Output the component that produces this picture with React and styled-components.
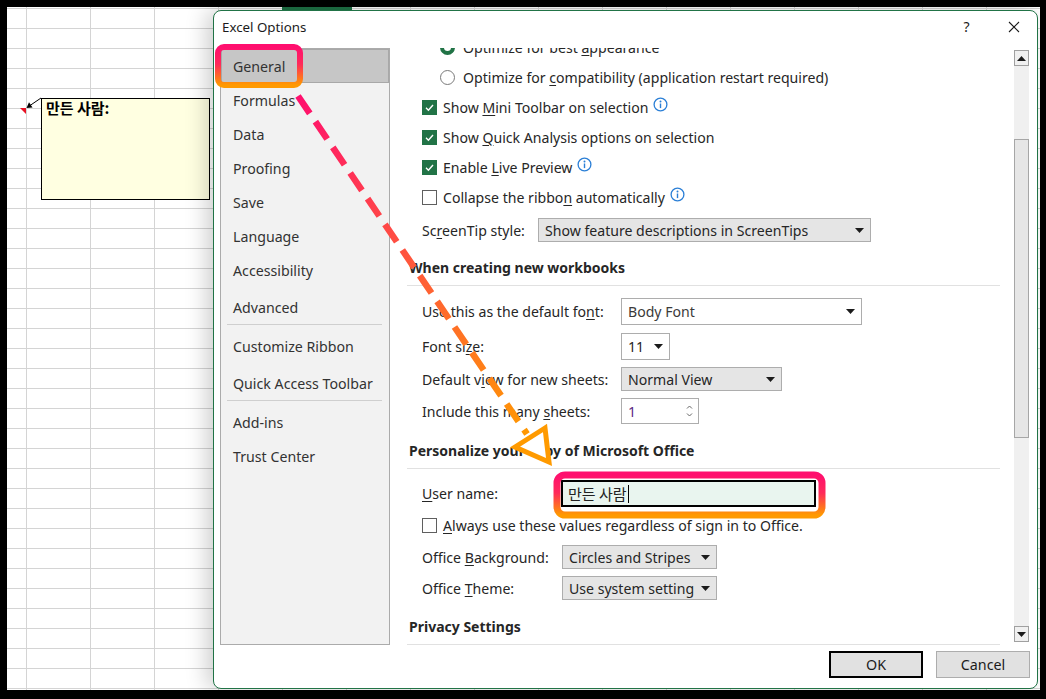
import React from 'react';
import styled, { createGlobalStyle } from 'styled-components';

const GlobalStyle = createGlobalStyle`
  html, body {
    margin: 0;
    padding: 0;
    background: #000;
  }
  body {
    font-family: "Noto Sans", "Open Sans", sans-serif;
    -webkit-font-smoothing: antialiased;
  }
`;

const Frame = styled.div`
  position: relative;
  width: 1046px;
  height: 699px;
  box-sizing: border-box;
  background: #000;
  padding: 7px 6px 9px 7px;
  overflow: hidden;
`;

const Sheet = styled.div`
  position: relative;
  height: 100%;
  background-color: #fff;
  background-image: linear-gradient(to right, #d4d4d4 1px, transparent 1px),
    linear-gradient(to bottom, #d4d4d4 1px, transparent 1px);
  background-size: 64px 20px;
  background-position: 19px 1px;
`;

const ColumnMark = styled.div`
  margin-left: 275px;
  width: 70px;
  height: 3px;
  background: #1e7145;
`;

const Comment = styled.div`
  position: absolute;
  left: 34px;
  top: 91px;
  width: 169px;
  height: 102px;
  box-sizing: border-box;
  border: 1px solid #000;
  background: #ffffe1;
  padding: 0 4px;
  font-family: "Noto Sans CJK KR", sans-serif;
  font-weight: 700;
  font-size: 15px;
  line-height: 18px;
  color: #000;
`;

const Connector = styled.svg`
  position: absolute;
  left: 0;
  top: 0;
  width: 60px;
  height: 130px;
`;

const Dialog = styled.div`
  position: absolute;
  left: 206px;
  top: 3px;
  width: 825px;
  height: 679px;
  box-sizing: border-box;
  border: 1px solid #217346;
  border-radius: 8px;
  background: #fff;
  box-shadow: -6px 0 22px rgba(0, 0, 0, 0.2);
  display: flex;
  flex-direction: column;
  overflow: hidden;
  color: #262626;
`;

const TitleBar = styled.div`
  height: 29px;
  display: flex;
  align-items: center;
  padding-left: 8px;
  flex: none;
`;

const Title = styled.div`
  flex: 1;
  font-size: 13.3px;
  color: #1b1b1b;
  padding-top: 2px;
`;

const TitleButton = styled.div`
  width: 47px;
  height: 29px;
  display: flex;
  align-items: center;
  justify-content: center;
  font-size: 14px;
  color: #1b1b1b;
  padding-top: 2px;
`;

const Body = styled.div`
  height: 605px;
  display: flex;
  flex: none;
`;

const Nav = styled.div`
  margin: 8px 0 0 6px;
  width: 170px;
  height: 597px;
  box-sizing: border-box;
  border: 1px solid #ababab;
  background: #f2f2f2;
  flex: none;
`;

const NavItem = styled.div`
  height: 34px;
  margin-top: ${(p) => p.$mt || 0}px;
  box-sizing: border-box;
  display: flex;
  align-items: center;
  padding: 1px 0 0 11px;
  font-size: 14.2px;
  color: #333;
  background: ${(p) => (p.$active ? '#c6c6c6' : 'transparent')};
  border: 1px solid ${(p) => (p.$active ? '#a8a8a8' : 'transparent')};
`;

const NavRule = styled.div`
  height: 1px;
  margin: 0 7px 0 6px;
  background: #cfcfcf;
`;

const Content = styled.div`
  flex: 1;
  display: flex;
  min-width: 0;
`;

const Main = styled.div`
  flex: 1;
  margin-top: 8px;
  overflow: hidden;
  font-size: 14.1px;
`;

const Scroll = styled.div`
  margin-top: -16px;
`;

const Row = styled.div`
  display: flex;
  align-items: center;
  height: ${(p) => p.$h}px;
  margin-top: ${(p) => p.$mt || 0}px;
  padding-left: ${(p) => (p.$indent == null ? 32 : p.$indent)}px;
  white-space: nowrap;
`;

const Text = styled.span`
  white-space: pre;
`;

const Label = styled.div`
  width: ${(p) => p.$w}px;
  flex: none;
  white-space: pre;
`;

const Key = styled.span`
  text-decoration: underline;
  text-underline-offset: 2px;
  text-decoration-thickness: 1px;
`;

const Box = styled.span`
  width: 15px;
  height: 15px;
  box-sizing: border-box;
  flex: none;
  margin-right: 6px;
  border: 1px solid ${(p) => (p.$on ? '#217346' : '#5f5f5f')};
  background: ${(p) => (p.$on ? '#217346' : '#fff')};
  display: flex;
  align-items: center;
  justify-content: center;
`;

const Radio = styled.span`
  width: 15px;
  height: 15px;
  box-sizing: border-box;
  flex: none;
  margin-right: 8px;
  border-radius: 50%;
  border: ${(p) => (p.$on ? '4px solid #217346' : '1px solid #7a7a7a')};
  background: #fff;
`;

const InfoSvg = styled.svg`
  width: 15px;
  height: 15px;
  margin-left: 5px;
  margin-top: -6px;
  flex: none;
`;

const Section = styled.div`
  margin: 0 14px 0 17px;
  padding: ${(p) => p.$pt}px 0 7px 2px;
  border-bottom: 1px solid #e1e1e1;
  font-weight: 700;
  font-size: 14px;
  line-height: 20px;
  color: #262626;
`;

const Select = styled.div`
  width: ${(p) => p.$w}px;
  height: ${(p) => p.$h || 24}px;
  box-sizing: border-box;
  flex: none;
  border: 1px solid #adadad;
  background: ${(p) => (p.$white ? '#fff' : '#e5e5e5')};
  display: flex;
  align-items: center;
  justify-content: space-between;
  padding: 0 6px 0 6px;
`;

const SelectText = styled.span`
  color: ${(p) => p.$c || '#262626'};
`;

const Spin = styled.div`
  display: flex;
  flex-direction: column;
  gap: 4px;
  margin-right: -1px;
`;

const NameInput = styled.div`
  width: 255px;
  height: 27px;
  box-sizing: border-box;
  border: 2px solid #000;
  background: #e9f5ef;
  display: flex;
  align-items: center;
  padding-left: 5px;
  font-family: "Noto Sans CJK KR", sans-serif;
  font-size: 15px;
  color: #222;
`;

const Caret = styled.span`
  width: 1px;
  height: 18px;
  background: #000;
  margin-left: 1px;
`;

const ScrollBar = styled.div`
  width: 15px;
  margin: 10px 8px 3px 0;
  display: flex;
  flex-direction: column;
  background: #f0f0f0;
  flex: none;
`;

const ArrowButton = styled.div`
  height: 16px;
  box-sizing: border-box;
  border: 1px solid #a0a0a0;
  background: #f0f0f0;
  display: flex;
  align-items: center;
  justify-content: center;
`;

const Track = styled.div`
  flex: 1;
`;

const Thumb = styled.div`
  margin-top: 73px;
  height: 299px;
  box-sizing: border-box;
  border: 1px solid #a6a6a6;
  background: #e6e6e6;
`;

const Footer = styled.div`
  flex: 1;
  display: flex;
  justify-content: flex-end;
  align-items: flex-start;
  gap: 13px;
  padding: 6px 7px 0 0;
`;

const Button = styled.div`
  width: 94px;
  height: 27px;
  box-sizing: border-box;
  border: ${(p) => (p.$primary ? '2px solid #000' : '1px solid #adadad')};
  background: #e1e1e1;
  display: flex;
  align-items: center;
  justify-content: center;
  font-size: 14.3px;
  color: #1b1b1b;
`;

const Overlay = styled.svg`
  position: absolute;
  left: 0;
  top: 0;
  width: 1046px;
  height: 699px;
  pointer-events: none;
`;

const Info = () => (
  <InfoSvg viewBox="0 0 15 15">
    <circle cx="7.5" cy="7.5" r="6.4" fill="none" stroke="#2b7fd6" strokeWidth="1.3" />
    <circle cx="7.5" cy="4.6" r="1" fill="#2b7fd6" />
    <rect x="6.8" y="6.5" width="1.4" height="4.6" fill="#2b7fd6" />
  </InfoSvg>
);

const Check = ({ on }) => (
  <Box $on={on}>
    {on && (
      <svg width="11" height="11" viewBox="0 0 11 11">
        <path d="M2 5.8 L4.4 8.2 L9 3" fill="none" stroke="#fff" strokeWidth="1.4" />
      </svg>
    )}
  </Box>
);

const Caret9 = ({ up }) => (
  <svg width="9" height="5" viewBox="0 0 9 5">
    <path d={up ? 'M0 5 L4.5 0 L9 5 Z' : 'M0 0 L9 0 L4.5 5 Z'} fill="#1b1b1b" />
  </svg>
);

const Chevron = ({ up }) => (
  <svg width="7" height="4" viewBox="0 0 7 4">
    <path d={up ? 'M1 3.5 L3.5 1 L6 3.5' : 'M1 0.5 L3.5 3 L6 0.5'} fill="none" stroke="#666" strokeWidth="1" />
  </svg>
);

const navGroups = [
  [
    { label: 'General', active: true },
    { label: 'Formulas' },
    { label: 'Data' },
    { label: 'Proofing' },
    { label: 'Save' },
    { label: 'Language' },
    { label: 'Accessibility' },
    { label: 'Advanced', mt: 3 },
  ],
  [
    { label: 'Customize Ribbon', mt: 4 },
    { label: 'Quick Access Toolbar', mt: 3 },
  ],
  [
    { label: 'Add-ins', mt: 4 },
    { label: 'Trust Center' },
  ],
];

export default function App() {
  return (
    <Frame>
      <GlobalStyle />
      <Sheet>
        <ColumnMark />
        <Comment>만든 사람:</Comment>
        <Connector viewBox="0 0 60 130">
          <path d="M13 101 L19 101 L19 107 Z" fill="#e81123" />
          <line x1="34" y1="91" x2="23" y2="98.5" stroke="#000" strokeWidth="1" />
          <path d="M19.5 101 L22 95.2 L25.5 100.4 Z" fill="#000" />
        </Connector>

        <Dialog>
          <TitleBar>
            <Title>Excel Options</Title>
            <TitleButton>?</TitleButton>
            <TitleButton>
              <svg width="12" height="12" viewBox="0 0 12 12">
                <path d="M1 1 L11 11 M11 1 L1 11" stroke="#1b1b1b" strokeWidth="1.1" />
              </svg>
            </TitleButton>
          </TitleBar>

          <Body>
            <Nav>
              {navGroups.map((group, gi) => (
                <React.Fragment key={gi}>
                  {gi > 0 && <NavRule />}
                  {group.map((item) => (
                    <NavItem key={item.label} $active={item.active} $mt={item.mt}>
                      {item.label}
                    </NavItem>
                  ))}
                </React.Fragment>
              ))}
            </Nav>

            <Content>
              <Main>
                <Scroll>
                  <Row $h={30} $indent={50}>
                    <Radio $on />
                    <Text>Optimize for best <Key>a</Key>ppearance</Text>
                  </Row>
                  <Row $h={30} $indent={50}>
                    <Radio />
                    <Text>Optimize for <Key>c</Key>ompatibility (application restart required)</Text>
                  </Row>
                  <Row $h={30}>
                    <Check on />
                    <Text>Show <Key>M</Key>ini Toolbar on selection</Text>
                    <Info />
                  </Row>
                  <Row $h={30}>
                    <Check on />
                    <Text>Show <Key>Q</Key>uick Analysis options on selection</Text>
                  </Row>
                  <Row $h={30}>
                    <Check on />
                    <Text>Enable <Key>L</Key>ive Preview</Text>
                    <Info />
                  </Row>
                  <Row $h={30}>
                    <Check />
                    <Text>Collapse the ribbo<Key>n</Key> automatically</Text>
                    <Info />
                  </Row>
                  <Row $h={36}>
                    <Label $w={116}>
                      Sc<Key>r</Key>eenTip style:
                    </Label>
                    <Select $w={333}>
                      <SelectText>Show feature descriptions in ScreenTips</SelectText>
                      <Caret9 />
                    </Select>
                  </Row>

                  <Section $pt={10}>When creating new workbooks</Section>

                  <Row $h={27} $mt={12}>
                    <Label $w={199}>
                      Use this as the default fo<Key>n</Key>t:
                    </Label>
                    <Select $w={241} $h={27} $white>
                      <SelectText $c="#3a3a3a">Body Font</SelectText>
                      <Caret9 />
                    </Select>
                  </Row>
                  <Row $h={27} $mt={8}>
                    <Label $w={199}>
                      Font si<Key>z</Key>e:
                    </Label>
                    <Select $w={49} $h={27} $white>
                      <SelectText>11</SelectText>
                      <Caret9 />
                    </Select>
                  </Row>
                  <Row $h={24} $mt={7}>
                    <Label $w={199}>
                      Default v<Key>i</Key>ew for new sheets:
                    </Label>
                    <Select $w={161}>
                      <SelectText>Normal View</SelectText>
                      <Caret9 />
                    </Select>
                  </Row>
                  <Row $h={26} $mt={7}>
                    <Label $w={199}>
                      Include this many <Key>s</Key>heets:
                    </Label>
                    <Select $w={78} $h={26} $white>
                      <SelectText $c="#5a2a82">1</SelectText>
                      <Spin>
                        <Chevron up />
                        <Chevron />
                      </Spin>
                    </Select>
                  </Row>

                  <Section $pt={17}>Personalize your copy of Microsoft Office</Section>

                  <Row $h={27} $mt={11}>
                    <Label $w={139}>
                      <Key>U</Key>ser name:
                    </Label>
                    <NameInput>
                      만든 사람
                      <Caret />
                    </NameInput>
                  </Row>
                  <Row $h={30} $mt={3}>
                    <Check />
                    <Text><Key>A</Key>lways use these values regardless of sign in to Office.</Text>
                  </Row>
                  <Row $h={24} $mt={5}>
                    <Label $w={140}>
                      Office <Key>B</Key>ackground:
                    </Label>
                    <Select $w={155}>
                      <SelectText>Circles and Stripes</SelectText>
                      <Caret9 />
                    </Select>
                  </Row>
                  <Row $h={24} $mt={7}>
                    <Label $w={140}>
                      Office <Key>T</Key>heme:
                    </Label>
                    <Select $w={155}>
                      <SelectText>Use system setting</SelectText>
                      <Caret9 />
                    </Select>
                  </Row>

                  <Section $pt={17}>Privacy Settings</Section>
                </Scroll>
              </Main>

              <ScrollBar>
                <ArrowButton>
                  <Caret9 up />
                </ArrowButton>
                <Track>
                  <Thumb />
                </Track>
                <ArrowButton>
                  <Caret9 />
                </ArrowButton>
              </ScrollBar>
            </Content>
          </Body>

          <Footer>
            <Button $primary>OK</Button>
            <Button>Cancel</Button>
          </Footer>
        </Dialog>
      </Sheet>

      <Overlay viewBox="0 0 1046 699">
        <defs>
          <linearGradient id="ringA" x1="0" y1="0" x2="0" y2="1">
            <stop offset="0" stopColor="#ff0f6e" />
            <stop offset="0.45" stopColor="#ff2a5a" />
            <stop offset="1" stopColor="#ff9a00" />
          </linearGradient>
          <linearGradient id="dash" gradientUnits="userSpaceOnUse" x1="298" y1="96" x2="530" y2="440">
            <stop offset="0" stopColor="#ff0f6e" />
            <stop offset="0.5" stopColor="#ff5a3a" />
            <stop offset="1" stopColor="#ff9a00" />
          </linearGradient>
        </defs>
        <rect x="218" y="47" width="82" height="38" rx="6" fill="none" stroke="url(#ringA)" strokeWidth="6" />
        <rect x="557" y="475" width="265" height="40" rx="8" fill="none" stroke="url(#ringA)" strokeWidth="7" />
        <line x1="298" y1="96" x2="527" y2="434" stroke="url(#dash)" strokeWidth="6.5" strokeDasharray="21 10" />
        <path d="M545 428 L515 447 L549 462 Z" fill="#fff" stroke="#ff9a00" strokeWidth="5" strokeLinejoin="miter" />
      </Overlay>
    </Frame>
  );
}
